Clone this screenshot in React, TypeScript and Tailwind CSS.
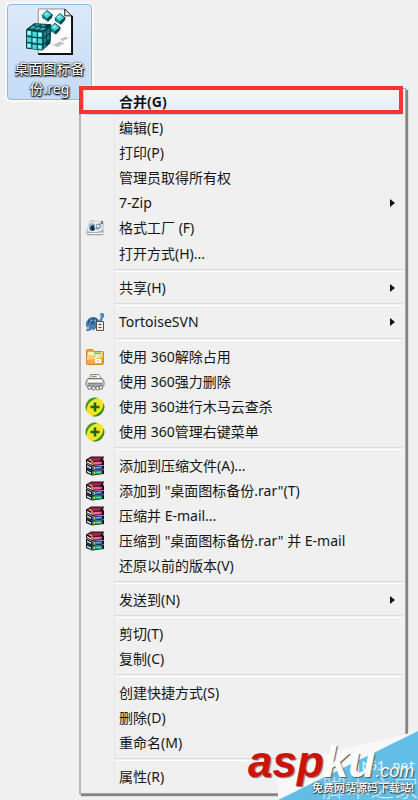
import type { ReactNode } from 'react';
import clsx from 'clsx';

type MenuItem = {
  label: string;
  icon?: ReactNode;
  submenu?: boolean;
  active?: boolean;
  tall?: boolean;
};

function RegFileIcon() {
  return (
    <svg width="50" height="48" viewBox="0 0 50 48" aria-hidden="true">
      <path d="M13 1h27l7 7v39H13z" fill="#fff" stroke="#8b8b8b" />
      <path d="M13 47h34.500V8" fill="none" stroke="#111" strokeWidth="2" />
      <path d="M40 1v7h7z" fill="#e8e8e8" stroke="#222" />
      <path d="M28 38l7-4 5 2-7 4zM35 32l6-3 3 2-6 3z" fill="#c4c4c4" />
      <path d="M1 22l8-6 17 1-1 19-8 7-16-2z" fill="#073f44" stroke="#073f44" strokeLinejoin="round" />
      <path d="M1.500 23l4.500.5v5l-4.500-.5zM7 24l4.500.5v5l-4.500-.5zM12.500 24.500l4.500.5v5l-4.500-.5zM1.500 29.500l4.500.5v5l-4.500-.5zM7 30.500l4.500.5v5l-4.500-.5zM12.500 31l4.500.5v5l-4.500-.5zM1.500 36l4.500.5v4.500l-4.500-.5zM7 37l4.500.5v4.500l-4.500-.5zM12.500 37.500l4.500.5v4.500l-4.500-.5z" fill="#4bd6da" />
      <path d="M2.500 23.500h2.500v3.500h-2.500zM13.500 25.500h2.500v3h-2.500zM8 31.500h2v2.500H8zM2.500 36.500h2v3h-2zM13.500 38.500h2v2h-2z" fill="#c4ffff" />
      <path d="M4 21l3-2.500 4 .5-3 2.500zM9 21.800l3-2.500 4 .5-3 2.500zM14 22.500l3-2.500 4 .5-3 2.500zM9 17.500l2-1 4 .5-2 1.300zM15 18.200l2-1 4 .5-2 1.300z" fill="#2ab1b8" />
      <path d="M18.500 25l2.500-2v5l-2.500 2zM22 22.500l2.500-2v5l-2.500 2zM18.500 31.500l2.500-2v5l-2.500 2zM22 29l2.500-2v4.500l-2.500 2zM18.500 38l2.500-2v3.500l-2.500 2z" fill="#0f858c" />
      {[[22, 8], [35, 11], [30, 21]].map(([x, y]) => (
        <g key={x} transform={`translate(${x} ${y})`}>
          <path d="M0-6l6 5-1 3-4 4-6-4 0-3z" fill="#06474b" />
          <path d="M0-5l4.500 4-4.500 3.500-4.500-3.500z" fill="#4bdbdf" />
          <path d="M-4.500-.5l4.500 3.500v2l-4-3.500z" fill="#1c9ca2" />
          <path d="M-1-3l2 1-2 1-1-1z" fill="#d4ffff" />
        </g>
      ))}
    </svg>
  );
}

function FormatFactoryIcon() {
  return (
    <svg width="20" height="18" viewBox="0 0 20 18" aria-hidden="true">
      <path d="M4 3q2-3 5-2l2 1 7-.5 1 2-.5 9 1 2-2 2H3q-3-1-2.500-3.500L2 10z" fill="#cbd1d6" />
      <path d="M4 5q2-3 6-2l7-.5-1 10-9 1.500-4-2z" fill="#eaf1f6" />
      <path d="M4 9q-1-4 3-5l3 1-2 6-3 1z" fill="#87afca" />
      <path d="M6 7l3-1 1 5-3 1-2-2z" fill="#152c45" />
      <path d="M11 5l5-1-.5 5-3 2-2-1z" fill="#86a1b2" />
      <path d="M12 6h2v2h-2z" fill="#fff" />
      <path d="M16 2h2v3h-2z" fill="#657b8b" />
      <path d="M2 13q8 2 17-1M2 15.500h16" fill="none" stroke="#9ba3aa" />
      <path d="M4 14.500h13" stroke="#fff" />
    </svg>
  );
}

function TortoiseIcon() {
  return (
    <svg width="20" height="20" viewBox="0 0 20 20" aria-hidden="true">
      <path d="M1 14q-1-3 1-5 2-4 6-4 5 0 6 4l2-4q-2-1-1-3 2-2 4 0 1 2-1 4l-2 5-4 4-4 4H8v-2l-4 2H1l1-3z" fill="#4c80b0" />
      <path d="M2.500 11q1-5 6-5 4 0 5 5-5 3-11 0z" fill="#24507e" />
      <path d="M5 8l2-1 1 2-2 1zM9 7l2 1v2l-2-.5zM4 10l2 .7v1l-2-.5zM8 11l3-.5v1H8z" fill="#79acd6" />
      <path d="M2 15l2-1v3H2zM15 3h2v1h-2z" fill="#8fbde0" />
      <path d="M11.500 9.500h7v9h-7z" fill="#efede7" stroke="#55504a" />
      <path d="M13.500 12.500h3M13.500 15.500h3" stroke="#4b4742" />
    </svg>
  );
}

function FolderUnlockIcon() {
  return (
    <svg width="20" height="18" viewBox="0 0 20 18" aria-hidden="true">
      <path d="M1.500 2.500q0-1 1-1h5l2 2h8q1 0 1 1v11q0 1-1 1h-15q-1 0-1-1z" fill="#efac38" stroke="#d58624" />
      <path d="M3 4h14v4H3z" fill="#fff2bb" />
      <path d="M9 4.500h7v1.500H9z" fill="#68b65a" />
      <path d="M2 7h16v9H2z" fill="#fbd078" />
      <path d="M2 12q8 0 16-3v7H2z" fill="#f5a944" />
      <path d="M11 11V9.500q0-1.500 1.800-1.500t1.700 1.500" fill="none" stroke="#fff" strokeWidth="1.200" />
      <path d="M10 11h6v4h-6z" fill="#fff" />
      <path d="M12.500 12h1v2h-1z" fill="#e99425" />
    </svg>
  );
}

function ShredderIcon() {
  return (
    <svg width="20" height="18" viewBox="0 0 20 18" aria-hidden="true">
      <path d="M4.500 7l1-5.500h8L15.500 4v3" fill="#fafafa" stroke="#8c8c8c" />
      <path d="M6.500 3.500h5" stroke="#6cab5b" strokeWidth="1.500" />
      <path d="M3 5.500h14l2 3v3.500q0 1-1 1H2q-1 0-1-1V8.500z" fill="#cfcfcf" stroke="#777" />
      <path d="M3 8h14" stroke="#fff" strokeWidth="2" />
      <path d="M3 10.800h14" stroke="#828282" strokeWidth="1.500" />
      <g fill="#eee" stroke="#666">
        <circle cx="4.500" cy="14.500" r="1.800" />
        <circle cx="8.500" cy="15.200" r="1.800" />
        <circle cx="12.500" cy="15.200" r="1.800" />
        <circle cx="16" cy="14.500" r="1.800" />
      </g>
    </svg>
  );
}

function Safe360Icon() {
  return (
    <svg width="20" height="20" viewBox="0 0 20 20" aria-hidden="true">
      <circle cx="10" cy="10" r="9.500" fill="#f6e321" />
      <path d="M1.500 14A9.500 9.500 0 0 1 13 1q-5 1-8 4t-3.500 9z" fill="#3b9a20" />
      <path d="M18.500 6A9.500 9.500 0 0 1 7 19q5-1 8-4t3.500-9z" fill="#299322" />
      <path d="M4 9Q6 4 12 3.500" fill="none" stroke="#d9f04e" strokeWidth="1.500" />
      <path d="M10 5.500v9M5.500 10h9" stroke="#176718" strokeWidth="2.500" />
    </svg>
  );
}

function RarIcon() {
  return (
    <svg width="20" height="20" viewBox="0 0 20 20" aria-hidden="true">
      {/* Three stacked books, bottom one first */}
      <path d="M1 12l6 3 12-1v4l-12 1.500L1 17z" fill="#101c18" />
      <path d="M7 15.500l10-.8v3L7 18.700z" fill="#14a878" />
      <path d="M2 14.500l4 2v1.500l-4-2z" fill="#f2f2f2" />
      <path d="M1 7.500l6 3 12-1v4L7 15l-6-3z" fill="#101727" />
      <path d="M7 10.800l10-.8v3L7 14z" fill="#2169c9" />
      <path d="M2 9.500l4 2V13l-4-2z" fill="#f2f2f2" />
      <path d="M1 3.500L6 .5h13L18 4l1 .5V9L7 10 1 7z" fill="#260916" />
      <path d="M2 3.500L6 1.500h12L14 5l-7 .5z" fill="#98234f" />
      <path d="M7 6.200l10-.7v2.700L7 9z" fill="#d94683" />
      <path d="M2 5l4 2v1.500L2 6.500z" fill="#f2f2f2" />
      <path d="M4 3.500l3 1.500v4M9.500 11v2.500M9.500 15.500V18" fill="none" stroke="#e8c83c" strokeWidth="1.200" />
      <path d="M9 7h6M11 11.700h5M11 16.300h5" stroke="#fff" strokeOpacity=".45" />
    </svg>
  );
}

const groups: MenuItem[][] = [
  [
    { label: '合并(G)', active: true, tall: true },
    { label: '编辑(E)' },
    { label: '打印(P)' },
    { label: '管理员取得所有权' },
    { label: '7-Zip', submenu: true },
    { label: '格式工厂 (F)', icon: <FormatFactoryIcon />, tall: true },
    { label: '打开方式(H)...' },
  ],
  [{ label: '共享(H)', submenu: true }],
  [{ label: 'TortoiseSVN', icon: <TortoiseIcon />, submenu: true, tall: true }],
  [
    { label: '使用 360解除占用', icon: <FolderUnlockIcon /> },
    { label: '使用 360强力删除', icon: <ShredderIcon /> },
    { label: '使用 360进行木马云查杀', icon: <Safe360Icon /> },
    { label: '使用 360管理右键菜单', icon: <Safe360Icon /> },
  ],
  [
    { label: '添加到压缩文件(A)...', icon: <RarIcon /> },
    { label: '添加到 "桌面图标备份.rar"(T)', icon: <RarIcon /> },
    { label: '压缩并 E-mail...', icon: <RarIcon /> },
    { label: '压缩到 "桌面图标备份.rar" 并 E-mail', icon: <RarIcon /> },
    { label: '还原以前的版本(V)' },
  ],
  [{ label: '发送到(N)', submenu: true }],
  [{ label: '剪切(T)' }, { label: '复制(C)' }],
  [{ label: '创建快捷方式(S)' }, { label: '删除(D)' }, { label: '重命名(M)' }],
  [{ label: '属性(R)' }],
];

function MenuRow({ item }: { item: MenuItem }) {
  return (
    <button
      type="button"
      role="menuitem"
      className={clsx(
        'flex w-full items-center rounded-sm text-left whitespace-nowrap',
        item.tall ? 'h-[26px]' : 'h-[25px]',
        item.active && 'bg-linear-to-b from-[#f3f6fb] to-[#e4ebf5] font-bold ring-1 ring-[#b5d5f1] ring-inset',
      )}
    >
      <span className="flex w-9 shrink-0 pl-0.5">{item.icon}</span>
      <span className="flex-1">{item.label}</span>
      {item.submenu && (
        <svg width="5" height="8" viewBox="0 0 5 8" className="mr-2" aria-hidden="true">
          <path d="M0 0l5 4-5 4z" fill="#111" />
        </svg>
      )}
    </button>
  );
}

function ContextMenu() {
  return (
    <div
      role="menu"
      className="relative -mt-3 mr-3 ml-[79px] border border-l-2 border-[#a5a5a5] border-l-[#b5b5b5] bg-[#f0f0f0] px-px pb-1 shadow-[2px_2px_1px_#858585]"
    >
      <div className="bg-linear-to-r from-transparent from-[32px] via-[#dedede] via-[32px] to-transparent to-[33px] px-px">
        {groups.map((group, i) => (
          <div key={i}>
            {i > 0 && <div role="separator" className="my-[3px] ml-8 h-[3px] border-t border-b border-t-[#dcdcdc] border-b-white" />}
            {group.map((item) => (
              <MenuRow key={item.label} item={item} />
            ))}
          </div>
        ))}
      </div>
      {/* Red marker around the default action */}
      <div className="pointer-events-none absolute -top-[3px] right-0.5 -left-0.5 h-7 border-4 border-[#fa3232]" />
    </div>
  );
}

function Watermark() {
  return (
    <div className="pointer-events-none absolute right-0 bottom-0 h-[84px] w-[172px]">
      <svg viewBox="0 0 172 84" className="absolute inset-0 h-full w-full" aria-hidden="true">
        <path d="M32 84V49L172 15v69z" fill="#f8f8f8" />
        <path d="M32 84L172 15v69z" fill="#62bde7" />
      </svg>
      <p className="absolute top-[43px] right-0.5 font-['Liberation_Mono'] text-[13px] leading-4 text-white/90">jb51.net</p>
      <p className="absolute right-0 bottom-0 text-2xl leading-6 font-light whitespace-nowrap text-white/70">脚本之家</p>
      <p className="absolute top-[22px] left-0.5 font-['Liberation_Sans'] text-[44px] leading-[48px] font-bold whitespace-nowrap italic">
        <span className="text-[#cf1208] [text-shadow:1px_1px_1px_#777]">asp</span>
        <span className="text-white [text-shadow:1px_1px_1px_#555]">ku</span>
        <span className="text-lg font-normal text-white [text-shadow:1px_1px_1px_#444]">.com</span>
      </p>
      <p className="absolute right-1 bottom-1 text-[11px] leading-4 font-medium whitespace-nowrap text-white [text-shadow:1px_1px_1px_#333,0_0_2px_#444]">
        免费网站源码下载站!
      </p>
    </div>
  );
}

export default function App() {
  return (
    <main className="relative min-h-screen overflow-hidden bg-[#f0f0f0] pt-1 font-['Noto_Sans','Noto_Sans_CJK_SC',sans-serif] text-[14px] leading-5 text-[#151515]">
      <button
        type="button"
        className="ml-[7px] flex h-24 w-[85px] flex-col items-center rounded-sm border border-[#8fb9e6] bg-linear-to-b from-[#dce9f8] to-[#c5dbf7] pt-[3px] shadow-[0_0_0_2px_#fbfbfb]"
      >
        <RegFileIcon />
        <span className="mt-1 w-[72px] text-center text-white [text-shadow:0_0_2px_#000,1px_1px_2px_#000,0_1px_1px_#222]">
          桌面图标备份.reg
        </span>
      </button>
      <ContextMenu />
      <Watermark />
    </main>
  );
}
